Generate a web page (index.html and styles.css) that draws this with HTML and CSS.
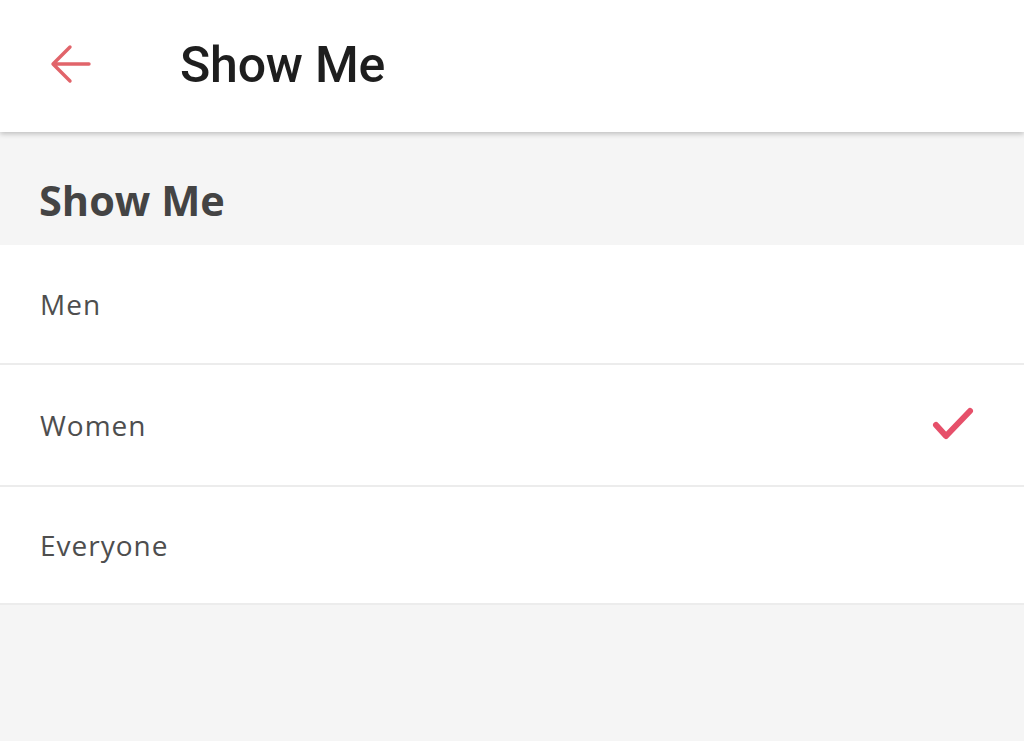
FILE: index.html
```html
<!DOCTYPE html>
<html>
<head>
<meta charset="utf-8">
<link rel="stylesheet" href="styles.css">
</head>
<body>
<header class="topbar">
  <span class="back">
    <svg width="44" height="40" viewBox="0 0 44 40"><path d="M40 20H5M21 3L4 20L21 37" fill="none" stroke="#e1646a" stroke-width="3.4" stroke-linecap="round" stroke-linejoin="round"/></svg>
  </span>
  <h1 class="title">Show Me</h1>
</header>
<section class="section-head">Show Me</section>
<ul class="options">
  <li class="option">Men</li>
  <li class="option">Women
    <svg class="check" width="42" height="38" viewBox="0 0 42 38"><path d="M4 20L14 31L38 6" fill="none" stroke="#e6506a" stroke-width="6" stroke-linecap="round" stroke-linejoin="round"/></svg>
  </li>
  <li class="option">Everyone</li>
</ul>
</body>
</html>
```
FILE: styles.css
```css
html, body { margin: 0; padding: 0; }
body {
  background: #f5f5f5;
  width: 1024px;
  height: 741px;
  overflow: hidden;
}
.topbar {
  height: 132px;
  background: #fff;
  display: flex;
  align-items: center;
  box-shadow: 0 2px 5px rgba(0,0,0,0.22);
  position: relative;
  z-index: 2;
}
.back {
  width: 44px;
  height: 40px;
  margin-left: 49px;
  margin-top: -4px;
  display: flex;
}
.title {
  margin: -2px 0 0 87px;
  font-family: Roboto, sans-serif;
  font-weight: 500;
  font-size: 50px;
  color: #1e1e1e;
  letter-spacing: -0.2px;
}
.section-head {
  height: 113px;
  box-sizing: border-box;
  padding-left: 39px;
  padding-top: 22px;
  display: flex;
  align-items: center;
  font-family: "Open Sans", sans-serif;
  font-weight: 700;
  font-size: 41.5px;
  color: #444;
}
.options {
  list-style: none;
  margin: 0;
  padding: 0;
  background: #fff;
}
.option {
  height: 120px;
  box-sizing: border-box;
  border-bottom: 2px solid #ececec;
  padding: 0 50px 0 40px;
  display: flex;
  align-items: center;
  justify-content: space-between;
  font-family: "Open Sans", sans-serif;
  font-size: 28px;
  letter-spacing: 1px;
  color: #4e4e4e;
}
.option:nth-child(2) { height: 122px; }
.option:nth-child(3) { height: 118px; }
.check { margin-top: -2px; }
```
